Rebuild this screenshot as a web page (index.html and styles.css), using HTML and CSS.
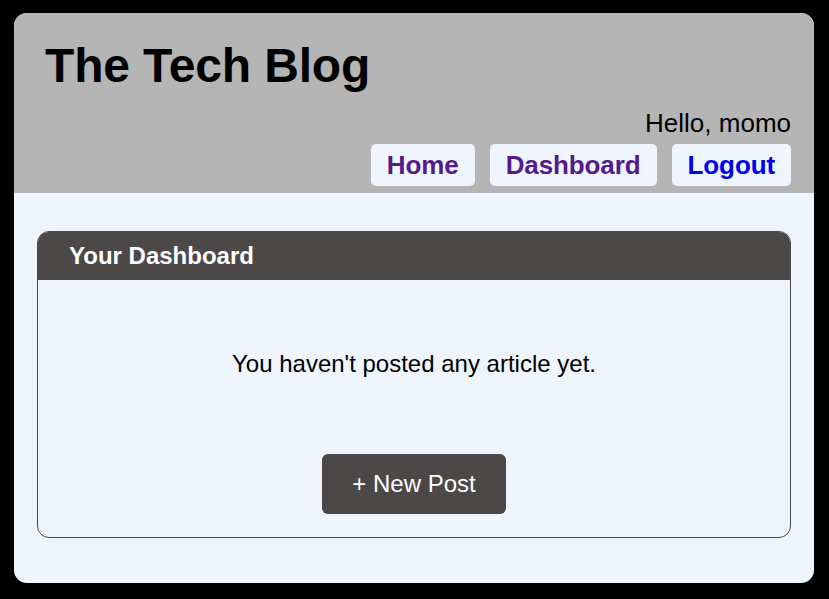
FILE: index.html
```html
<!DOCTYPE html>
<html lang="en">
<head>
<meta charset="utf-8">
<title>The Tech Blog</title>
<link rel="stylesheet" href="styles.css">
</head>
<body>
<div class="page">
  <header class="site-header">
    <h1 class="site-title">The Tech Blog</h1>
    <p class="greeting">Hello, momo</p>
    <nav class="nav">
      <a class="nav-link visited" href="#">Home</a>
      <a class="nav-link visited" href="#">Dashboard</a>
      <a class="nav-link" href="#">Logout</a>
    </nav>
  </header>
  <main class="main">
    <section class="card">
      <h2 class="card-header">Your Dashboard</h2>
      <div class="card-body">
        <p class="empty">You haven't posted any article yet.</p>
        <a class="new-post" href="#">+ New Post</a>
      </div>
    </section>
  </main>
</div>
</body>
</html>
```

FILE: styles.css
```css
html, body {
  margin: 0;
  padding: 0;
  background: #000;
}
body {
  font-family: "Liberation Sans", Arial, sans-serif;
  padding-top: 13px;
}
.page {
  width: 800px;
  height: 570px;
  margin-left: 14px;
  border-radius: 13px;
  overflow: hidden;
  background: #eef5fd;
  display: flex;
  flex-direction: column;
}
.site-header {
  background: #b5b5b5;
  padding: 25px 23px 6px 31px;
  height: 180px;
  box-sizing: border-box;
}
.site-title {
  margin: 0 0 15px;
  font-size: 48px;
  line-height: 55px;
  font-weight: bold;
  letter-spacing: -0.15px;
  color: #000;
}
.greeting {
  margin: 0;
  text-align: right;
  font-size: 26px;
  line-height: 30px;
  color: #000;
}
.nav {
  display: flex;
  justify-content: flex-end;
  gap: 15px;
  margin-top: 6px;
}
.nav-link {
  background: #eef5fd;
  border-radius: 5px;
  padding: 6px 16px;
  font-size: 26px;
  line-height: 30px;
  font-weight: bold;
  letter-spacing: -0.1px;
  color: #0000ee;
  text-decoration: none;
}
.nav-link.visited {
  color: #551a8b;
}
.main {
  flex: 1;
  padding: 38px 23px 45px;
}
.card {
  border: 1px solid #4d4848;
  border-radius: 12px;
  overflow: hidden;
}
.card-header {
  margin: 0;
  background: #4d4848;
  color: #fff;
  font-size: 24px;
  line-height: 28px;
  font-weight: bold;
  padding: 10px 31px 10px;
}
.card-body {
  display: flex;
  flex-direction: column;
  align-items: center;
  padding: 70px 0 23px;
}
.empty {
  margin: 0 0 76px;
  font-size: 24px;
  line-height: 28px;
  color: #000;
}
.new-post {
  display: block;
  background: #4d4848;
  color: #fff;
  text-decoration: none;
  font-size: 24px;
  line-height: 28px;
  padding: 16px 30px;
  border-radius: 6px;
}
```
